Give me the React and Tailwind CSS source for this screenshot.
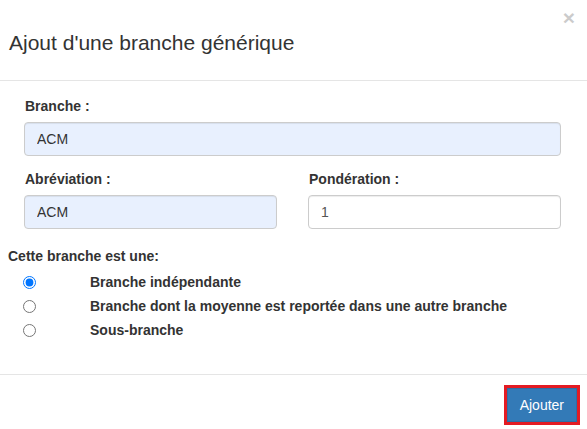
import React, { useState } from 'react';

const font = { fontFamily: '"Liberation Sans", Arial, sans-serif' };

const OPTIONS = [
  { value: 'independante', label: 'Branche indépendante' },
  { value: 'reportee', label: 'Branche dont la moyenne est reportée dans une autre branche' },
  { value: 'sous', label: 'Sous-branche' }
];

export default function App() {
  const [type, setType] = useState('independante');

  return (
    <div className="w-[587px] h-[429px] bg-white text-[#333] overflow-hidden" style={font}>
      {/* En-tête */}
      <div className="relative h-[81px] border-b border-[#e5e5e5] pl-[9px] pt-[28px]">
        <h4 className="text-[21px] leading-[30px] font-normal text-[#333]">Ajout d'une branche générique</h4>
        <button
          type="button"
          className="absolute right-[12px] top-[5px] text-[21px] font-bold leading-[26px] text-black opacity-20"
        >
          ×
        </button>
      </div>

      {/* Corps */}
      <div className="h-[293px] pt-[15px]">
        <div className="px-[24px]">
          <label className="block text-[14px] font-bold leading-[20px] mb-[6px] pl-[1px]">Branche :</label>
          <input
            type="text"
            defaultValue="ACM"
            className="block w-[537px] h-[34px] px-[12px] text-[14px] text-[#333] bg-[#e8f0fe] border border-[#ccc] rounded-[4px] shadow-[inset_0_1px_1px_rgba(0,0,0,0.075)] outline-none"
          />
        </div>

        <div className="flex px-[24px] gap-[31px] mt-[13px]">
          <div className="w-[253px]">
            <label className="block text-[14px] font-bold leading-[20px] mb-[6px] pl-[1px]">Abréviation :</label>
            <input
              type="text"
              defaultValue="ACM"
              className="block w-full h-[34px] px-[12px] text-[14px] text-[#333] bg-[#e8f0fe] border border-[#ccc] rounded-[4px] shadow-[inset_0_1px_1px_rgba(0,0,0,0.075)] outline-none"
            />
          </div>
          <div className="w-[253px]">
            <label className="block text-[14px] font-bold leading-[20px] mb-[6px] pl-[1px]">Pondération :</label>
            <input
              type="text"
              defaultValue="1"
              className="block w-full h-[34px] px-[12px] text-[14px] text-[#555] bg-white border border-[#ccc] rounded-[4px] shadow-[inset_0_1px_1px_rgba(0,0,0,0.075)] outline-none"
            />
          </div>
        </div>

        <div className="pl-[8px] mt-[17px]">
          <div className="text-[14px] font-bold leading-[20px]">Cette branche est une:</div>
          <div className="flex flex-col mt-[4px]">
            {OPTIONS.map((opt) => (
              <label key={opt.value} className="flex items-center h-[24px] cursor-pointer">
                <span className="w-[82px] flex items-center pl-[15px]">
                  <input
                    type="radio"
                    name="type"
                    checked={type === opt.value}
                    onChange={() => setType(opt.value)}
                    className="m-0 w-[13px] h-[13px]"
                  />
                </span>
                <span className="text-[14px] font-bold leading-[20px]">{opt.label}</span>
              </label>
            ))}
          </div>
        </div>
      </div>

      {/* Pied */}
      <div className="border-t border-[#e5e5e5] flex justify-end pr-[10px] pt-[13px]">
        <button
          type="button"
          className="h-[34px] px-[12px] text-[14px] leading-[20px] text-white bg-[#337ab7] border border-[#2e6da4] outline-[3px] outline-solid outline-[#e31b23]"
        >
          Ajouter
        </button>
      </div>
    </div>
  );
}
